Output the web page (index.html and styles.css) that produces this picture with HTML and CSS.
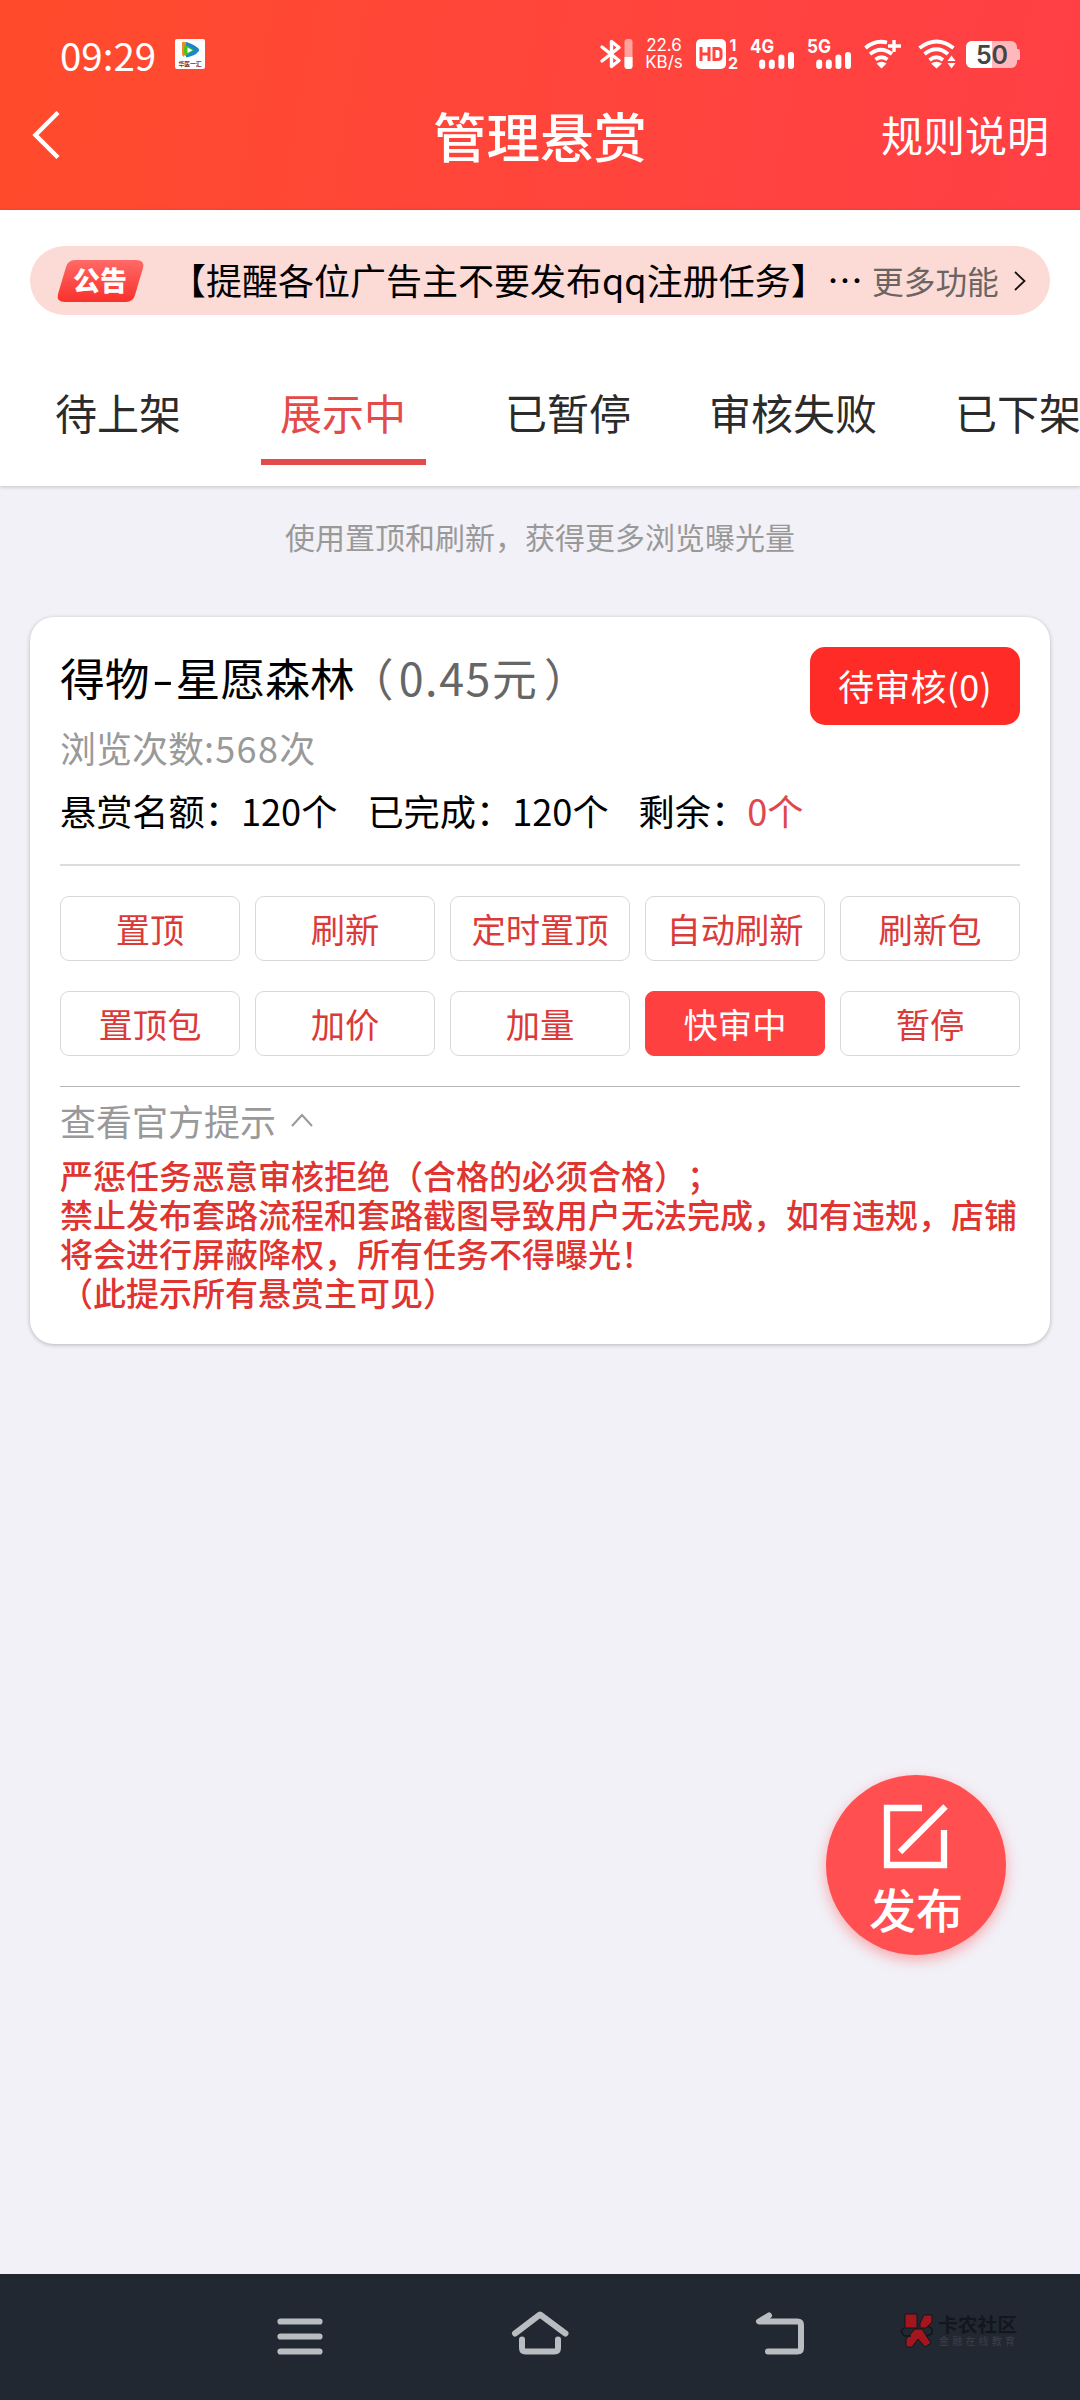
FILE: index.html
```html
<!DOCTYPE html>
<html lang="zh-CN">
<head>
<meta charset="utf-8">
<title>管理悬赏</title>
<link rel="stylesheet" href="styles.css">
</head>
<body>
<div class="screen">
  <header class="header">
    <div class="status">
      <span class="time">09:29</span>
      <svg class="app-icon" width="30" height="30" viewBox="0 0 30 30">
        <rect width="30" height="30" rx="2" fill="#fff"/>
        <path d="M7 4q0-1.500 2-1.200L14 4 9 18Q7 17 7 15z" fill="#f08a24"/>
        <path d="M11 3q8 2 12.500 6.500 1.500 1.500 0 3Q20 17 11 18.500z" fill="#1c86c8"/>
        <path d="M10 5.500l9 5.500-9 6q-2-6 0-11.500z" fill="#42c51d"/>
        <path d="M12.500 8.500l5 2.700-5 2.800z" fill="#fff"/>
        <text x="15" y="26.500" font-size="5.800" font-weight="700" text-anchor="middle" fill="#7a3030">华医一汇</text>
      </svg>
      <div class="status-icons">
        <svg width="33" height="30" viewBox="0 0 33 30">
          <path d="M2 8L19 21.500 11.500 27.500V2.500L19 8.500 2 22" fill="none" stroke="#fff" stroke-width="3.400" stroke-linejoin="round" stroke-linecap="round"/>
          <rect x="24.500" width="8" height="30" rx="3" fill="#ffa39d"/>
          <path d="M24.500 18h8v9a3 3 0 0 1-3 3h-2a3 3 0 0 1-3-3z" fill="#fff"/>
        </svg>
        <span class="speed"><span>22.6</span><span>KB/s</span></span>
        <svg class="hd" width="42" height="30" viewBox="0 0 42 30">
          <rect width="30" height="30" rx="5" fill="#fff"/>
          <path d="M5 8v14M13 8v14M5 15h8M18 9.500v11h3.500q3.500 0 3.500-3v-5q0-3-3.500-3z" fill="none" stroke="#ff453b" stroke-width="3"/>
          <text x="37" y="12" class="sv" font-size="16" text-anchor="middle">1</text>
          <text x="37" y="29.500" class="sv" font-size="16" text-anchor="middle">2</text>
        </svg>
        <svg class="cell" width="44" height="30" viewBox="0 0 44 30">
          <text x="0" y="14" class="sv" font-size="19" textLength="24" lengthAdjust="spacingAndGlyphs">4G</text>
          <path d="M12.200 23.500V27M21.800 23.500V27M31.400 18.500V27M41 16V27" stroke="#fff" stroke-width="6" stroke-linecap="round"/>
        </svg>
        <svg class="cell2" width="45" height="30" viewBox="0 0 45 30">
          <text x="0" y="14" class="sv" font-size="19" textLength="24" lengthAdjust="spacingAndGlyphs">5G</text>
          <path d="M12.200 23.500V27M21.800 23.500V27M31.400 18.500V27M41 16V27" stroke="#fff" stroke-width="6" stroke-linecap="round"/>
        </svg>
        <svg class="wifi" width="38" height="30" viewBox="0 0 38 30">
          <path d="M1.500 9Q11 .500 23 3.500M6 15Q17 6.500 28 15M11.500 20.500Q17.500 16 23.500 20.500" fill="none" stroke="#fff" stroke-width="3.800"/>
          <path d="M12.500 24.500q5-3.500 10 0l-5 5z" fill="#fff"/>
          <path d="M30 1v12M24 7h13" stroke="#fff" stroke-width="3.400"/>
        </svg>
        <svg class="wifi2" width="38" height="30" viewBox="0 0 38 30">
          <path d="M1.500 9Q18.500-4 35.500 9M6.500 15Q18.500 5.500 30 15M11.500 21Q18.500 15.500 25 21" fill="none" stroke="#fff" stroke-width="3.800"/>
          <path d="M13 24.500q5.500-3.500 11 0l-5.500 5zM29.500 22l4-5.500 4 5.500zM29.500 24l4 5.500 4-5.500z" fill="#fff"/>
        </svg>
        <svg class="battery" width="54" height="30" viewBox="0 0 54 30">
          <rect y="2" width="51" height="27" rx="6" fill="#ffb9bc"/>
          <path d="M51 10h1.500q1.500 0 1.500 1.500v8q0 1.500-1.500 1.500H51z" fill="#ffb9bc"/>
          <path d="M26 2H6a6 6 0 0 0-6 6v15a6 6 0 0 0 6 6h20z" fill="#fff"/>
          <text x="26" y="25" font-size="25" font-weight="600" text-anchor="middle" fill="#444" class="inter">50</text>
        </svg>
      </div>
    </div>
    <div class="titlebar">
      <svg width="28" height="48" viewBox="0 0 28 48"><path d="M26 1.500L3.500 24 26 46.500" fill="none" stroke="#fff" stroke-width="4.500"/></svg>
      <h1>管理悬赏</h1>
      <a class="rules">规则说明</a>
    </div>
  </header>

  <section class="top">
    <div class="notice">
      <svg class="badge" width="88" height="44" viewBox="0 0 88 44">
        <defs><linearGradient id="bg" x1="0" y1="0" x2="0" y2="1"><stop offset="0" stop-color="#ff6a68"/><stop offset="1" stop-color="#f9302a"/></linearGradient></defs>
        <path d="M18 1h61q9 0 7 8l-8 27q-2 7-9 7H8q-9 0-7-8L9 8q2-7 9-7z" fill="url(#bg)"/>
        <text x="43" y="32" font-size="27" font-weight="900" text-anchor="middle" fill="#fff">公告</text>
      </svg>
      <span class="notice-text">【提醒各位广告主不要发布qq注册任务】</span>
      <span class="dots">…</span>
      <span class="more">更多功能</span>
      <svg width="12" height="20" viewBox="0 0 12 20"><path d="M1 1l9.500 9L1 19" fill="none" stroke="#111" stroke-width="1.800"/></svg>
    </div>
    <nav class="tabs">
      <span class="tab">待上架</span>
      <span class="tab active">展示中</span>
      <span class="tab">已暂停</span>
      <span class="tab wide">审核失败</span>
      <span class="tab">已下架</span>
    </nav>
  </section>

  <main class="main">
    <p class="hint">使用置顶和刷新，获得更多浏览曝光量</p>
    <article class="card">
      <div class="card-head">
        <div class="info">
          <h2>得物<span class="dash">-</span>星愿森林<span class="price"><span class="open">（</span><span class="num">0.45</span>元<span class="close">）</span></span></h2>
          <p class="views">浏览次数<span class="num">:568</span>次</p>
        </div>
        <button class="review">待审核(0)</button>
      </div>
      <div class="counts">
        <span>悬赏名额：120个</span>
        <span>已完成：120个</span>
        <span>剩余：<em>0个</em></span>
      </div>
      <div class="actions">
        <button>置顶</button><button>刷新</button><button>定时置顶</button><button>自动刷新</button><button>刷新包</button>
        <button>置顶包</button><button>加价</button><button>加量</button><button class="on">快审中</button><button>暂停</button>
      </div>
      <div class="tips-head">查看官方提示
        <svg width="22" height="14" viewBox="0 0 22 14"><path d="M1 13L11 2l10 11" fill="none" stroke="#999" stroke-width="2"/></svg>
      </div>
      <p class="tips">严惩任务恶意审核拒绝（合格的必须合格）；<br>禁止发布套路流程和套路截图导致用户无法完成，如有违规，店铺将会进行屏蔽降权，所有任务不得曝光！<br>（此提示所有悬赏主可见）</p>
    </article>
  </main>

  <button class="fab">
    <svg width="66" height="66" viewBox="0 0 66 66"><path d="M39 4H4v57h57V26M62.500 2.500L17 48" fill="none" stroke="#fff" stroke-width="6.300"/></svg>
    <span>发布</span>
  </button>

  <footer class="sysnav">
    <svg width="46" height="46" viewBox="0 0 46 46"><path d="M3.500 10.500h39M3.500 25.500h39M3.500 40.500h39" stroke="#b9bdc1" stroke-width="6.200" stroke-linecap="round"/></svg>
    <svg width="60" height="46" viewBox="0 0 60 46"><path d="M5 22.500L30 3.500l25.500 19M12 28.500V37q0 3.500 3.500 3.500h29q3.500 0 3.500-3.500v-8.500" fill="none" stroke="#b9bdc1" stroke-width="6" stroke-linecap="round" stroke-linejoin="round"/></svg>
    <svg class="back" width="50" height="46" viewBox="0 0 50 46"><path d="M13 4.500L3 10.500h38.500q3.500 0 3.500 3.500v23q0 3.500-3.500 3.500H12" fill="none" stroke="#b9bdc1" stroke-width="6" stroke-linecap="round" stroke-linejoin="round"/></svg>
    <div class="mark">
      <svg width="32" height="35" viewBox="0 0 32 35">
        <path d="M4 1h12v14H4zM19 10L23 2h8v7l-6 6h-6zM14 16h7l9 14-6 4-7-8-6 8H5v-8z" fill="#a3161e" stroke="#11161e"/>
        <path d="M3 15l-3 3 3 5h7M27 13l4 3v5l-6 2" fill="none" stroke="#11161e" stroke-width="1.500"/>
      </svg>
      <div class="mark-text"><b>卡农社区</b><small>金融在线教育</small></div>
    </div>
  </footer>
</div>
</body>
</html>
```
FILE: styles.css
```css
* { box-sizing: border-box; margin: 0; padding: 0; }
body { font-family: "Noto Sans CJK SC", sans-serif; background: #f2f1f8; color: #000; text-spacing-trim: space-all; }
button { font: inherit; border: 0; background: none; }
svg { display: block; flex: none; overflow: visible; }
.screen { position: relative; width: 1080px; height: 2400px; overflow: hidden; display: flex; flex-direction: column; }

.header { height: 210px; background: linear-gradient(100deg, #ff4b2b 0%, #ff453b 50%, #ff3f45 100%); color: #fff; }
.status { height: 88px; padding: 20px 60px 0; display: flex; align-items: center; }
.time { font-size: 38.500px; line-height: 40px; width: 115px; padding-bottom: 1px; }
.status-icons { margin-left: 395px; display: flex; height: 30px; }
.speed { display: flex; flex-direction: column; justify-content: space-between; width: 38px; height: 34px; margin: -2px 0 0 12px; font: 17px/17px Inter, sans-serif; text-align: center; white-space: nowrap; }
.sv { fill: #fff; font-family: Inter, sans-serif; font-weight: 700; }
.inter { font-family: Inter, sans-serif; }
.hd { margin-left: 13px; }
.cell { margin-left: 12px; }
.cell2 { margin-left: 13px; }
.wifi { margin-left: 12px; }
.wifi2 { margin-left: 16px; }
.battery { margin-left: 10px; }
.titlebar { height: 94px; padding: 0 32px; display: grid; grid-template-columns: 200px 1fr 200px; align-items: center; }
.titlebar h1 { text-align: center; font-size: 53.500px; line-height: 60px; font-weight: 500; padding-bottom: 1px; }
.rules { font-size: 42px; line-height: 50px; text-align: right; padding-bottom: 2px; margin-right: -1px; }

.top { height: 276px; padding-top: 36px; background: #fff; box-shadow: 0 1px 4px rgba(0,0,0,.2); z-index: 1; }
.notice { margin: 0 30px; height: 69px; border-radius: 35px; background: #fcdbd6; padding-left: 27px; display: flex; align-items: center; }
.notice-text, .dots { font-size: 36px; line-height: 44px; padding-bottom: 3px; white-space: nowrap; }
.notice-text { margin-left: 25px; width: 657px; }
.dots { width: 45px; text-align: left; }
.more { font-size: 31.700px; line-height: 44px; color: #6b6462; margin-right: 15px; padding-bottom: 2px; }
.tabs { display: flex; height: 150px; padding-left: 36px; }
.tab { font-size: 42px; line-height: 60px; color: #2b2b2b; padding: 67px 19px 0; width: 165px; white-space: nowrap; flex: none; margin-right: 60px; height: 150px; }
.tab.wide { width: 206px; margin-left: -21px; margin-right: 40px; }
.tab.active { color: #e34b4b; border-bottom: 6px solid #e34b4b; }

.main { flex: 1; padding: 0 30px; }
.hint { text-align: center; font-size: 30px; line-height: 40px; color: #999; margin-top: 30px; margin-bottom: 61px; }
.card { background: #fff; border-radius: 24px; height: 727px; padding: 30px; box-shadow: 0 1px 4px rgba(0,0,0,.25); }
.card-head { display: flex; justify-content: space-between; align-items: flex-start; }
h2 { font-size: 44.800px; line-height: 60px; font-weight: 400; white-space: nowrap; }
.dash { display: inline-block; width: 26px; text-align: center; transform: scaleX(1.400); }
.price { color: #666; }
.price .num { letter-spacing: 1.600px; }
.open { display: inline-block; margin: 0 5px 0 -6px; }
.close { margin-left: 7px; }
.views { font-size: 36px; line-height: 50px; color: #999; margin-top: 15px; }
.views .num { letter-spacing: 1.300px; }
.review { width: 210px; height: 78px; border-radius: 15px; background: #ff2b27; color: #fff; font-size: 36px; letter-spacing: .300px; padding-bottom: 2px; }
.counts { display: flex; gap: 30px; font-size: 36.200px; line-height: 50px; margin-top: 13px; }
.counts em { font-style: normal; color: #e0474c; }
.actions { display: grid; grid-template-columns: repeat(5, 180px); grid-auto-rows: 65px; gap: 30px 15px; margin-top: 29px; border-top: 2px solid #dcdcdc; border-bottom: 1px solid #b5b5b5; padding: 30px 0; }
.actions button { border: 1px solid #d8d8d8; border-radius: 9px; font-size: 34.300px; line-height: 50px; color: #db3b38; padding-bottom: 1px; }
.actions .on { background: #ff4040; border-color: #ff4040; color: #fff; }
.tips-head { display: flex; align-items: center; gap: 15px; color: #999; font-size: 36px; line-height: 50px; margin-top: 8px; }
.tips { color: #e03430; font-size: 33px; line-height: 39px; font-weight: 500; margin-top: 11px; }

.fab { position: absolute; left: 826px; top: 1775px; width: 180px; height: 180px; border-radius: 50%; background: #ff4f50; color: #fff; box-shadow: 0 5px 14px rgba(255,80,80,.45); display: flex; flex-direction: column; align-items: center; padding-top: 29px; }
.fab span { font-size: 47px; line-height: 60px; font-weight: 500; margin-top: 8px; }

.sysnav { height: 126px; background: #222831; display: flex; padding: 37px 0 0 277px; }
.sysnav svg + svg { margin-left: 187px; }
.sysnav .back { margin-left: 186px; }
.mark { display: flex; margin: 2px 0 0 95px; gap: 5px; }
.mark-text { display: flex; flex-direction: column; white-space: nowrap; }
.mark b { font-size: 19.800px; line-height: 21px; color: #12171f; }
.mark small { font-size: 10px; line-height: 14px; letter-spacing: 3.200px; color: #3b4049; margin-left: 1px; }
```
